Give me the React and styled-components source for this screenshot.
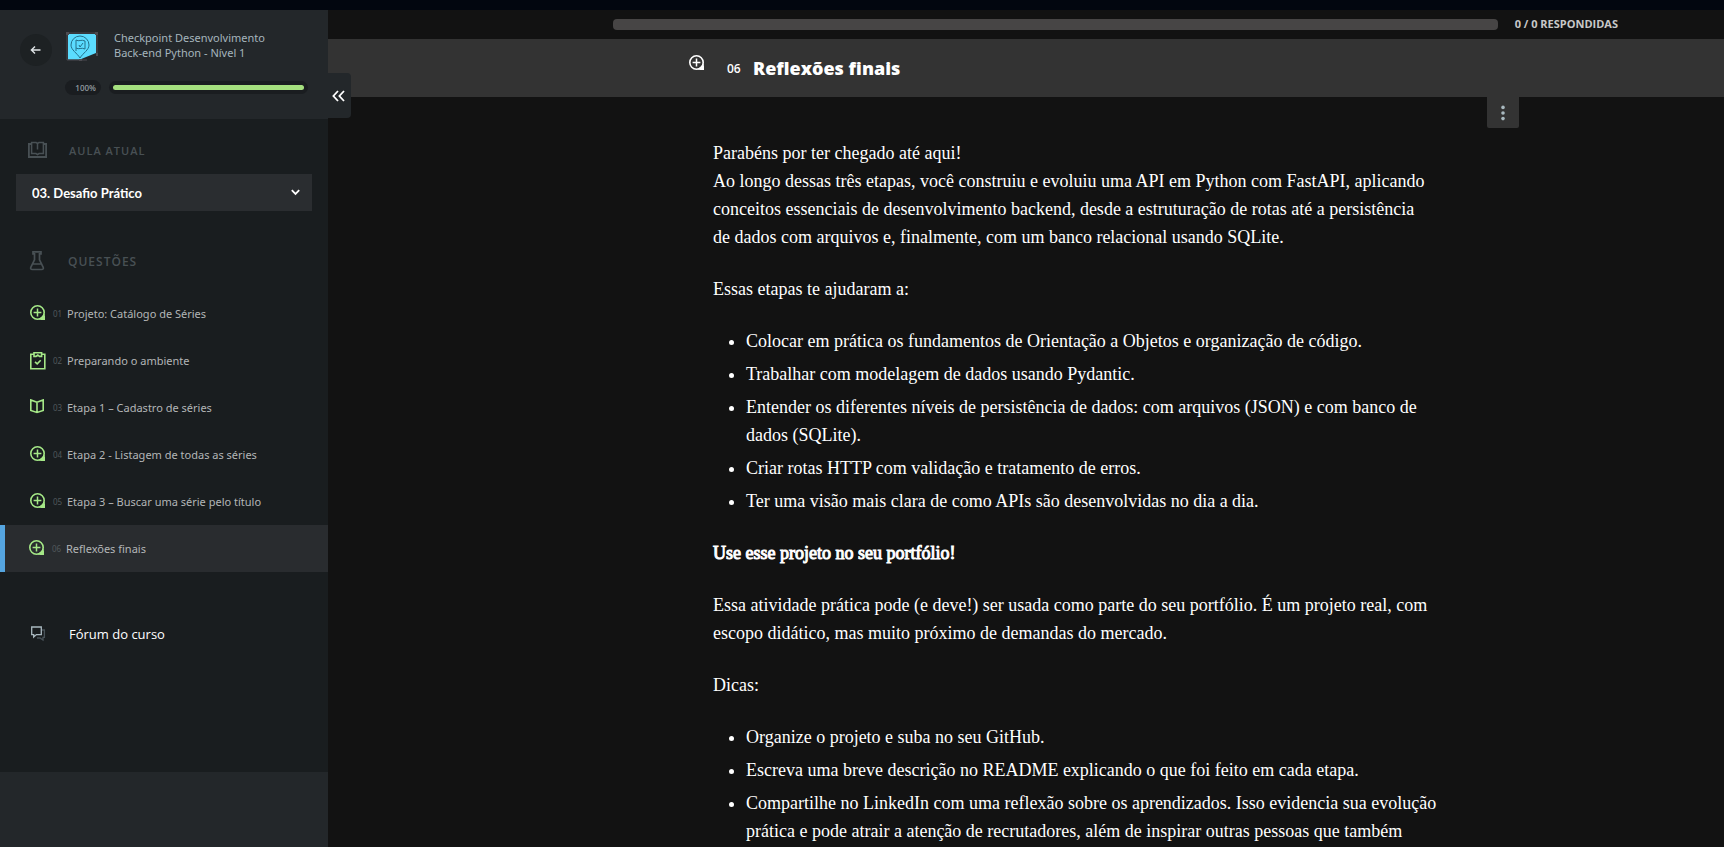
import React from "react";
import styled, { createGlobalStyle } from "styled-components";

const GlobalStyle = createGlobalStyle`
  * { box-sizing: border-box; }
  body {
    margin: 0;
    background: #121212;
    color: #fff;
    font-family: "Open Sans", "Noto Sans", sans-serif;
  }
  button, select { font-family: inherit; }
`;

const Page = styled.div`
  display: flex;
  flex-direction: column;
  height: 100vh;
`;

const TopStrip = styled.div`
  flex: none;
  height: 10px;
  background: #02060f;
`;

const Body = styled.div`
  display: flex;
  flex: 1;
  min-height: 0;
`;

const Sidebar = styled.aside`
  position: relative;
  z-index: 2;
  display: flex;
  flex-direction: column;
  flex: none;
  width: 328px;
  background: #191d1f;
`;

const SidebarHeader = styled.header`
  display: flex;
  gap: 13px;
  height: 109px;
  padding: 20px 20px 0;
  background: #23272a;
`;

const BackButton = styled.button`
  display: flex;
  align-items: center;
  justify-content: center;
  flex: none;
  width: 32px;
  height: 32px;
  margin-top: 4px;
  padding: 0;
  border: 0;
  border-radius: 50%;
  background: #1d2123;
  color: #dfe4e6;
`;

const CourseBlock = styled.div`
  flex: 1;
`;

const Course = styled.div`
  display: flex;
  gap: 15px;
`;

const CourseTitle = styled.h2`
  width: 170px;
  margin: 0;
  color: #a5b5bd;
  font-family: "Noto Sans", sans-serif;
  font-size: 11px;
  font-weight: 400;
  line-height: 15px;
`;

const ProgressRow = styled.div`
  display: flex;
  align-items: center;
  gap: 8px;
  margin-top: 18px;
`;

const Percent = styled.span`
  width: 36px;
  padding-right: 5px;
  border-radius: 8px;
  background: #1a1d20;
  color: #8f999e;
  font-size: 8px;
  font-weight: 600;
  line-height: 15px;
  text-align: right;
`;

const Track = styled.div`
  flex: 1;
  padding: 4px;
  border-radius: 7px;
  background: #1a1d20;
`;

const TrackFill = styled.div`
  height: 5px;
  border-radius: 3px;
  background: #a5e07f;
`;

const CollapseButton = styled.button`
  position: absolute;
  top: 63px;
  left: 100%;
  display: flex;
  align-items: center;
  width: 23px;
  height: 45px;
  padding: 0 4px;
  border: 0;
  border-radius: 0 4px 4px 0;
  background: #23272a;
  color: #fff;
`;

const Section = styled.section`
  display: flex;
  flex-direction: column;
`;

const SectionTitle = styled.h3`
  display: flex;
  align-items: center;
  gap: 20px;
  height: 20px;
  margin: 0;
  padding-left: 28px;
  color: #485054;
  font-size: ${(p) => (p.$small ? 11 : 12)}px;
  font-weight: 600;
  letter-spacing: 1px;
`;

const SelectWrap = styled.label`
  display: grid;
  align-items: center;
  margin: 14px 16px 0;
  > * { grid-area: 1 / 1; }
  > svg { justify-self: end; margin-right: 12px; pointer-events: none; }
`;

const LessonSelect = styled.select`
  appearance: none;
  width: 100%;
  height: 37px;
  padding: 0 16px;
  border: 0;
  border-radius: 0;
  background: #2a2d30;
  color: #fff;
  font-family: Lato, sans-serif;
  font-size: 13px;
  font-weight: 700;
`;

const QuestionList = styled.ol`
  margin: 19px 0 0;
  padding: 0;
  list-style: none;
`;

const QuestionLink = styled.a`
  display: flex;
  align-items: center;
  height: 47px;
  padding-left: ${(p) => (p.$active ? 24 : 30)}px;
  border-left: ${(p) => (p.$active ? "5px solid #55a5e0" : "0")};
  background: ${(p) => (p.$active ? "#292c2f" : "transparent")};
  color: #b3b6b7;
  font-family: "Noto Sans", sans-serif;
  font-size: 11px;
  text-decoration: none;
`;

const QuestionNumber = styled.span`
  width: 14px;
  margin-left: 5px;
  color: #51585b;
  font-size: 8px;
  line-height: 16px;
`;

const ForumLink = styled.a`
  display: flex;
  align-items: center;
  gap: 22px;
  height: 30px;
  margin-top: 47px;
  padding-left: 31px;
  color: #fff;
  font-size: 13px;
  text-decoration: none;
`;

const SidebarFooter = styled.footer`
  height: 75px;
  margin-top: auto;
  background: #23272a;
`;

const Main = styled.main`
  display: flex;
  flex-direction: column;
  flex: 1;
  min-width: 0;
`;

const AnswerBar = styled.div`
  display: flex;
  align-items: center;
  flex: none;
  gap: 17px;
  height: 29px;
  padding: 0 106px 0 285px;
`;

const AnswerTrack = styled.div`
  flex: 1;
  height: 11px;
  margin-bottom: 1px;
  border-radius: 4px;
  background: #474545;
`;

const AnswerCount = styled.span`
  color: #c8c8c8;
  font-size: 11px;
  font-weight: 700;
  line-height: 16px;
  padding-bottom: 2px;
  text-transform: uppercase;
`;

const TitleBar = styled.header`
  position: relative;
  z-index: 1;
  display: flex;
  align-items: center;
  flex: none;
  height: 58px;
  padding: 0 205px 0 361px;
  background: #333;
`;

const TitleIcon = styled.span`
  display: flex;
  width: 38px;
  height: 26px;
`;

const TitleNumber = styled.span`
  width: 26px;
  font-size: 12px;
  font-weight: 600;
`;

const Title = styled.h1`
  margin: 0;
  font-size: 18px;
  font-weight: 800;
`;

const MenuButton = styled.button`
  position: absolute;
  top: 100%;
  right: 205px;
  display: flex;
  justify-content: center;
  align-items: center;
  width: 32px;
  height: 31px;
  padding: 0;
  border: 0;
  border-radius: 0 0 2px 2px;
  background: #333;
  color: #a9b9c0;
`;

const Article = styled.article`
  flex: 1;
  min-height: 0;
  padding: 42px 286px 0 385px;
  overflow-y: auto;
  scrollbar-width: none;
  font-family: "Source Serif Pro", "Liberation Serif", serif;
  font-size: 18px;
  line-height: 28px;

  p, ul { margin: 0 0 24px; }
  ul { padding-left: 33px; }
  li + li { margin-top: 5px; }
  strong { font-weight: 400; -webkit-text-stroke: 1px currentColor; }
`;

const CommentPlusIcon = () => (
  <svg width="18" height="18" viewBox="0 0 18 18" fill="none" stroke="currentColor" aria-hidden="true">
    <circle cx="7.5" cy="7.5" r="6.7" strokeWidth="1.6" />
    <path d="M7.5 3.6v7.8M3.6 7.5h7.8" strokeWidth="1.5" />
    <path d="M15 7.5V15H7.5C11.6 15 15 11.6 15 7.5Z" fill="currentColor" stroke="none" />
    <path d="M13.8 10.4v3.4h-3.4z" fill="currentColor" strokeWidth="1.4" />
  </svg>
);

const ClipboardIcon = () => (
  <svg width="18" height="18" viewBox="0 0 18 18" fill="none" stroke="currentColor" strokeWidth="1.6" aria-hidden="true">
    <path d="M4 2.3H.8v14.4h14V2.3H12" />
    <path d="M4 .8h7.6v3.6H9.5L7.8 3 6 4.4H4z" />
    <path d="M5 9.8l2.2 2.1 3.5-3.7" />
  </svg>
);

const BookIcon = () => (
  <svg width="18" height="18" viewBox="0 0 18 18" fill="none" stroke="currentColor" strokeWidth="1.6" aria-hidden="true">
    <path d="M7 3.2L.8 .9v10.6L7 13.4l6.2-1.9V.9zM7 3v10" />
  </svg>
);

const LessonIcon = () => (
  <svg width="21" height="18" viewBox="0 0 21 18" fill="none" stroke="currentColor" aria-hidden="true">
    <path d="M3 3H.9v13h17.2V3H16" strokeWidth="1.8" />
    <path d="M3.6 1.6h4.6L9.5 2.5l1.3-.9h4.6v11H11l-1.5 1-1.5-1H3.6zM9.5 2.5v6" strokeWidth="1.5" />
  </svg>
);

const FlaskIcon = () => (
  <svg width="20" height="20" viewBox="-2 0 20 20" fill="none" stroke="currentColor" strokeWidth="1.7" aria-hidden="true">
    <path d="M3 .8h8v2H9.5v6l3.6 7.4c.6 1.3 0 2.3-1.4 2.3H2.3c-1.4 0-2-1-1.4-2.3l3.6-7.4v-6H3zM3 13h8" />
  </svg>
);

const ForumIcon = () => (
  <svg width="16" height="16" viewBox="0 0 16 16" fill="none" aria-hidden="true">
    <path d="M11 4h2.4v7.4H12V14l-3-2H6" stroke="#485258" strokeWidth="1.3" />
    <path d="M.7 1h9.6v7.6H5.4L2.7 11V8.6h-2z" stroke="#a9b9c0" strokeWidth="1.3" />
  </svg>
);

const ArrowIcon = () => (
  <svg width="12" height="10" viewBox="0 0 12 10" fill="none" stroke="currentColor" strokeWidth="1.4" aria-hidden="true">
    <path d="M5 1.5L1.4 5 5 8.5M1.5 5H10.5" />
  </svg>
);

const ChevronIcon = () => (
  <svg width="9" height="7" viewBox="0 0 9 7" fill="none" stroke="#fff" strokeWidth="1.8" aria-hidden="true">
    <path d="M.8 1.2l3.7 3.7 3.7-3.7" />
  </svg>
);

const DoubleChevronIcon = () => (
  <svg width="13" height="12" viewBox="0 0 13 12" fill="none" stroke="currentColor" strokeWidth="1.8" aria-hidden="true">
    <path d="M6 1L1.4 6 6 11M12 1L7.4 6 12 11" />
  </svg>
);

const DotsIcon = () => (
  <svg width="4" height="16" viewBox="0 0 4 16" fill="currentColor" aria-hidden="true">
    <circle cx="2" cy="2.4" r="1.8" />
    <circle cx="2" cy="8" r="1.8" />
    <circle cx="2" cy="13.6" r="1.8" />
  </svg>
);

const CourseLogo = () => (
  <svg width="34" height="32" viewBox="0 0 34 32" fill="none" aria-hidden="true">
    <path d="M3 4h28v19L15 29.5H3z" fill="#5bdcff" />
    <path d="M2 3h30v22M2 3v27h20" stroke="#4c4b50" strokeWidth="1" />
    <path d="M1 2h3v3H1zM30 2h3v3h-3zM31 23h2v3h-2zM14 29h3v2h-3z" fill="#4c4b50" />
    <path d="M15 28C12 23 6 20 6 15a9 9 0 0 1 18 0c0 5-6 8-9 13z" stroke="#24708a" strokeWidth="1" />
    <path d="M11 21V10c3 2 5-1 9 1v8c-4-2-6 1-9-1" stroke="#24708a" strokeWidth="1" />
    <path d="M14 15l1 2 3-4" stroke="#24708a" strokeWidth="1" />
  </svg>
);

const QUESTIONS = [
  { number: "01", title: "Projeto: Catálogo de Séries", Icon: CommentPlusIcon },
  { number: "02", title: "Preparando o ambiente", Icon: ClipboardIcon },
  { number: "03", title: "Etapa 1 – Cadastro de séries", Icon: BookIcon },
  { number: "04", title: "Etapa 2 - Listagem de todas as séries", Icon: CommentPlusIcon },
  { number: "05", title: "Etapa 3 – Buscar uma série pelo título", Icon: CommentPlusIcon },
  { number: "06", title: "Reflexões finais", Icon: CommentPlusIcon, active: true },
];

const GreenIcon = styled.span`
  display: flex;
  color: #a5e887;
`;

const LessonSection = styled(Section)`
  padding-top: 21px;
`;

const QuestionSection = styled(Section)`
  padding-top: 40px;
`;

export default function App() {
  return (
    <>
      <GlobalStyle />
      <Page>
        <TopStrip />
        <Body>
          <Sidebar>
            <SidebarHeader>
              <BackButton type="button" aria-label="Voltar"><ArrowIcon /></BackButton>
              <CourseBlock>
                <Course>
                  <CourseLogo />
                  <CourseTitle>Checkpoint Desenvolvimento Back-end Python - Nível 1</CourseTitle>
                </Course>
                <ProgressRow>
                  <Percent>100%</Percent>
                  <Track><TrackFill /></Track>
                </ProgressRow>
              </CourseBlock>
            </SidebarHeader>
            <CollapseButton type="button" aria-label="Recolher menu"><DoubleChevronIcon /></CollapseButton>
            <LessonSection>
              <SectionTitle $small><LessonIcon />AULA ATUAL</SectionTitle>
              <SelectWrap>
                <LessonSelect aria-label="Aula atual" defaultValue="3">
                  <option value="3">03. Desafio Prático</option>
                </LessonSelect>
                <ChevronIcon />
              </SelectWrap>
            </LessonSection>
            <QuestionSection as="nav">
              <SectionTitle><FlaskIcon />QUESTÕES</SectionTitle>
              <QuestionList>
                {QUESTIONS.map(({ number, title, Icon, active }) => (
                  <li key={number}>
                    <QuestionLink href="#" $active={active} aria-current={active ? "page" : undefined}>
                      <GreenIcon><Icon /></GreenIcon>
                      <QuestionNumber>{number}</QuestionNumber>
                      {title}
                    </QuestionLink>
                  </li>
                ))}
              </QuestionList>
            </QuestionSection>
            <ForumLink href="#"><ForumIcon />Fórum do curso</ForumLink>
            <SidebarFooter />
          </Sidebar>
          <Main>
            <AnswerBar>
              <AnswerTrack />
              <AnswerCount>0 / 0 respondidas</AnswerCount>
            </AnswerBar>
            <TitleBar>
              <TitleIcon><CommentPlusIcon /></TitleIcon>
              <TitleNumber>06</TitleNumber>
              <Title>Reflexões finais</Title>
              <MenuButton type="button" aria-label="Mais opções"><DotsIcon /></MenuButton>
            </TitleBar>
            <Article>
              <p>
                Parabéns por ter chegado até aqui!
                <br />
                Ao longo dessas três etapas, você construiu e evoluiu uma API em Python com FastAPI, aplicando
                conceitos essenciais de desenvolvimento backend, desde a estruturação de rotas até a persistência
                <br />
                de dados com arquivos e, finalmente, com um banco relacional usando SQLite.
              </p>
              <p>Essas etapas te ajudaram a:</p>
              <ul>
                <li>Colocar em prática os fundamentos de Orientação a Objetos e organização de código.</li>
                <li>Trabalhar com modelagem de dados usando Pydantic.</li>
                <li>
                  Entender os diferentes níveis de persistência de dados: com arquivos (JSON) e com banco de
                  dados (SQLite).
                </li>
                <li>Criar rotas HTTP com validação e tratamento de erros.</li>
                <li>Ter uma visão mais clara de como APIs são desenvolvidas no dia a dia.</li>
              </ul>
              <p><strong>Use esse projeto no seu portfólio!</strong></p>
              <p>
                Essa atividade prática pode (e deve!) ser usada como parte do seu portfólio. É um projeto real, com
                escopo didático, mas muito próximo de demandas do mercado.
              </p>
              <p>Dicas:</p>
              <ul>
                <li>Organize o projeto e suba no seu GitHub.</li>
                <li>Escreva uma breve descrição no README explicando o que foi feito em cada etapa.</li>
                <li>
                  Compartilhe no LinkedIn com uma reflexão sobre os aprendizados. Isso evidencia sua evolução
                  prática e pode atrair a atenção de recrutadores, além de inspirar outras pessoas que também
                </li>
              </ul>
            </Article>
          </Main>
        </Body>
      </Page>
    </>
  );
}
